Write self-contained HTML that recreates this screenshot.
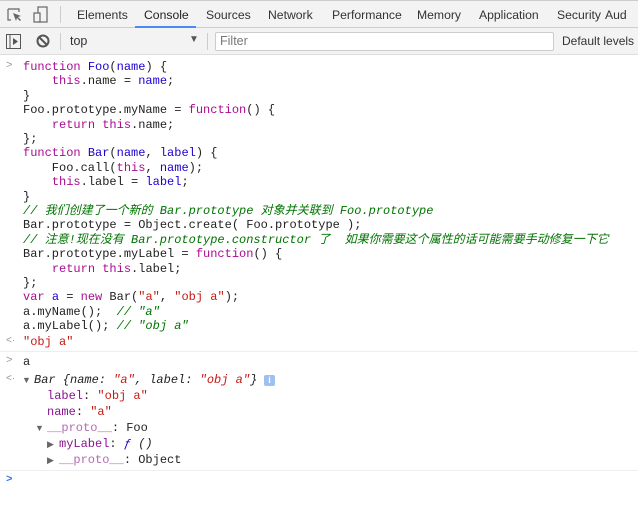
<!DOCTYPE html>
<html><head><meta charset="utf-8"><style>
*{margin:0;padding:0;box-sizing:border-box}
body{width:638px;height:509px;overflow:hidden;background:#fff;font-family:"Liberation Sans",sans-serif;position:relative}
.tabs{position:absolute;left:0;top:0;width:638px;height:28px;background:#f3f3f3;border-top:1px solid #ccc;border-bottom:1px solid #cdcdcd}
.tab{position:absolute;top:7px;font-size:12.2px;color:#333;white-space:nowrap}
.tb{position:absolute;left:0;top:28px;width:638px;height:27px;background:#f3f3f3;border-bottom:1px solid #ddd}
.code{position:absolute;font-family:"Liberation Mono","Noto Sans CJK SC",monospace;font-size:12px;white-space:pre;color:#222}
.k{color:#aa0d91}.b{color:#1c00cf}.s{color:#c41a16}.c{color:#007400;font-style:italic}.p{color:#881391}.pf{color:#b36bb3}
.ln{position:absolute;left:23px;height:14px;line-height:14px}
.gut{position:absolute;left:6px;font-size:11px;color:#999;font-family:"Liberation Sans",sans-serif}
.sep{position:absolute;left:0;width:638px;height:1px;background:#eee}
.tri{position:absolute;font-size:9px;color:#666}
</style></head><body>
<div class="tabs">
<svg style="position:absolute;left:7px;top:6px" width="16" height="16"><path d="M1 2h11v3M1 2v11h3" fill="none" stroke="#666" stroke-width="1.2"/><path d="M6 6l8 3-3 1 3 3-1 1-3-3-1 3z" fill="#666"/></svg>
<svg style="position:absolute;left:33px;top:5px" width="16" height="18"><rect x="5" y="1" width="9" height="15" fill="none" stroke="#666" stroke-width="1.2"/><rect x="1" y="7" width="6" height="9" fill="#f3f3f3" stroke="#666" stroke-width="1.2"/></svg>
<div style="position:absolute;left:60px;top:5px;width:1px;height:17px;background:#ccc"></div>
<span class="tab" style="left:77px">Elements</span>
<span class="tab" style="left:144px;color:#222">Console</span>
<div style="position:absolute;left:135px;top:25px;width:61px;height:2px;background:#4a8af4"></div>
<span class="tab" style="left:206px">Sources</span>
<span class="tab" style="left:268px">Network</span>
<span class="tab" style="left:332px">Performance</span>
<span class="tab" style="left:417px">Memory</span>
<span class="tab" style="left:479px">Application</span>
<span class="tab" style="left:557px">Security</span>
<span class="tab" style="left:605px">Aud</span>
</div>
<div class="tb">
<svg style="position:absolute;left:6px;top:6px" width="15" height="15"><rect x="0.5" y="0.5" width="14" height="14" fill="none" stroke="#555"/><line x1="4" y1="1" x2="4" y2="14" stroke="#555"/><path d="M7 4l5 3.5-5 3.5z" fill="#555"/></svg>
<svg style="position:absolute;left:36px;top:6px" width="14" height="14"><circle cx="7" cy="7" r="5.5" fill="none" stroke="#555" stroke-width="2"/><line x1="3" y1="3" x2="11" y2="11" stroke="#555" stroke-width="2"/></svg>
<div style="position:absolute;left:60px;top:5px;width:1px;height:17px;background:#ccc"></div>
<span style="position:absolute;left:70px;top:6px;font-size:12.5px;color:#333">top</span>
<span style="position:absolute;left:189px;top:6px;font-size:10px;color:#555">▼</span>
<div style="position:absolute;left:207px;top:5px;width:1px;height:17px;background:#ccc"></div>
<div style="position:absolute;left:215px;top:4px;width:339px;height:19px;background:#fff;border:1px solid #ccc;border-radius:2px"></div>
<span style="position:absolute;left:220px;top:6px;font-size:12.5px;color:#777">Filter</span>
<span style="position:absolute;left:562px;top:6px;font-size:12px;color:#333;white-space:nowrap">Default levels ▼</span>
</div>

<span class="gut" style="top:59px">&gt;</span>
<div class="code">
<div class="ln" style="top:60px"><span class="k">function</span> <span class="b">Foo</span>(<span class="b">name</span>) {</div>
<div class="ln" style="top:74.4px">    <span class="k">this</span>.name = <span class="b">name</span>;</div>
<div class="ln" style="top:88.8px">}</div>
<div class="ln" style="top:103.2px">Foo.prototype.myName = <span class="k">function</span>() {</div>
<div class="ln" style="top:117.6px">    <span class="k">return</span> <span class="k">this</span>.name;</div>
<div class="ln" style="top:132px">};</div>
<div class="ln" style="top:146.4px"><span class="k">function</span> <span class="b">Bar</span>(<span class="b">name</span>, <span class="b">label</span>) {</div>
<div class="ln" style="top:160.8px">    Foo.call(<span class="k">this</span>, <span class="b">name</span>);</div>
<div class="ln" style="top:175.2px">    <span class="k">this</span>.label = <span class="b">label</span>;</div>
<div class="ln" style="top:189.6px">}</div>
<div class="ln c" style="top:204px">// 我们创建了一个新的 Bar.prototype 对象并关联到 Foo.prototype</div>
<div class="ln" style="top:218.4px">Bar.prototype = Object.create( Foo.prototype );</div>
<div class="ln c" style="top:232.8px">// 注意!现在没有 Bar.prototype.constructor 了  如果你需要这个属性的话可能需要手动修复一下它</div>
<div class="ln" style="top:247.2px">Bar.prototype.myLabel = <span class="k">function</span>() {</div>
<div class="ln" style="top:261.6px">    <span class="k">return</span> <span class="k">this</span>.label;</div>
<div class="ln" style="top:276px">};</div>
<div class="ln" style="top:290.4px"><span class="k">var</span> <span class="b">a</span> = <span class="k">new</span> Bar(<span class="s">"a"</span>, <span class="s">"obj a"</span>);</div>
<div class="ln" style="top:304.8px">a.myName();  <span class="c">// "a"</span></div>
<div class="ln" style="top:319.2px">a.myLabel(); <span class="c">// "obj a"</span></div>
<div class="ln s" style="top:335px">"obj a"</div>
<div class="ln" style="top:355px">a</div>
<div class="ln" style="top:373px;left:34px;font-style:italic">Bar {name: <span class="s">"a"</span>, label: <span class="s">"obj a"</span>}</div>
<div class="ln" style="top:389px;left:47px"><span class="p">label</span>: <span class="s">"obj a"</span></div>
<div class="ln" style="top:405px;left:47px"><span class="p">name</span>: <span class="s">"a"</span></div>
<div class="ln" style="top:421px;left:47px"><span class="pf">__proto__</span>: Foo</div>
<div class="ln" style="top:437px;left:59px"><span class="p">myLabel</span>: <span class="b" style="font-style:italic">ƒ</span> <span style="font-style:italic">()</span></div>
<div class="ln" style="top:453px;left:59px"><span class="pf">__proto__</span>: Object</div>
</div>
<span class="gut" style="top:335px;font-size:10px">&lt;·</span>
<div class="sep" style="top:351px"></div>
<span class="gut" style="top:354px">&gt;</span>
<span class="gut" style="top:373px;font-size:10px">&lt;·</span>
<span class="tri" style="left:22px;top:375px">▼</span>
<div style="position:absolute;left:264px;top:375px;width:11px;height:11px;background:#9fbff0;border-radius:2px;color:#fff;font-size:9px;text-align:center;line-height:11px;font-weight:bold">i</div>
<span class="tri" style="left:35px;top:423px">▼</span>
<span class="tri" style="left:47px;top:439px">▶</span>
<span class="tri" style="left:47px;top:455px">▶</span>
<div class="sep" style="top:470px"></div>
<span class="gut" style="top:473px;color:#2f7bf5;font-weight:bold">&gt;</span>
</body></html>
